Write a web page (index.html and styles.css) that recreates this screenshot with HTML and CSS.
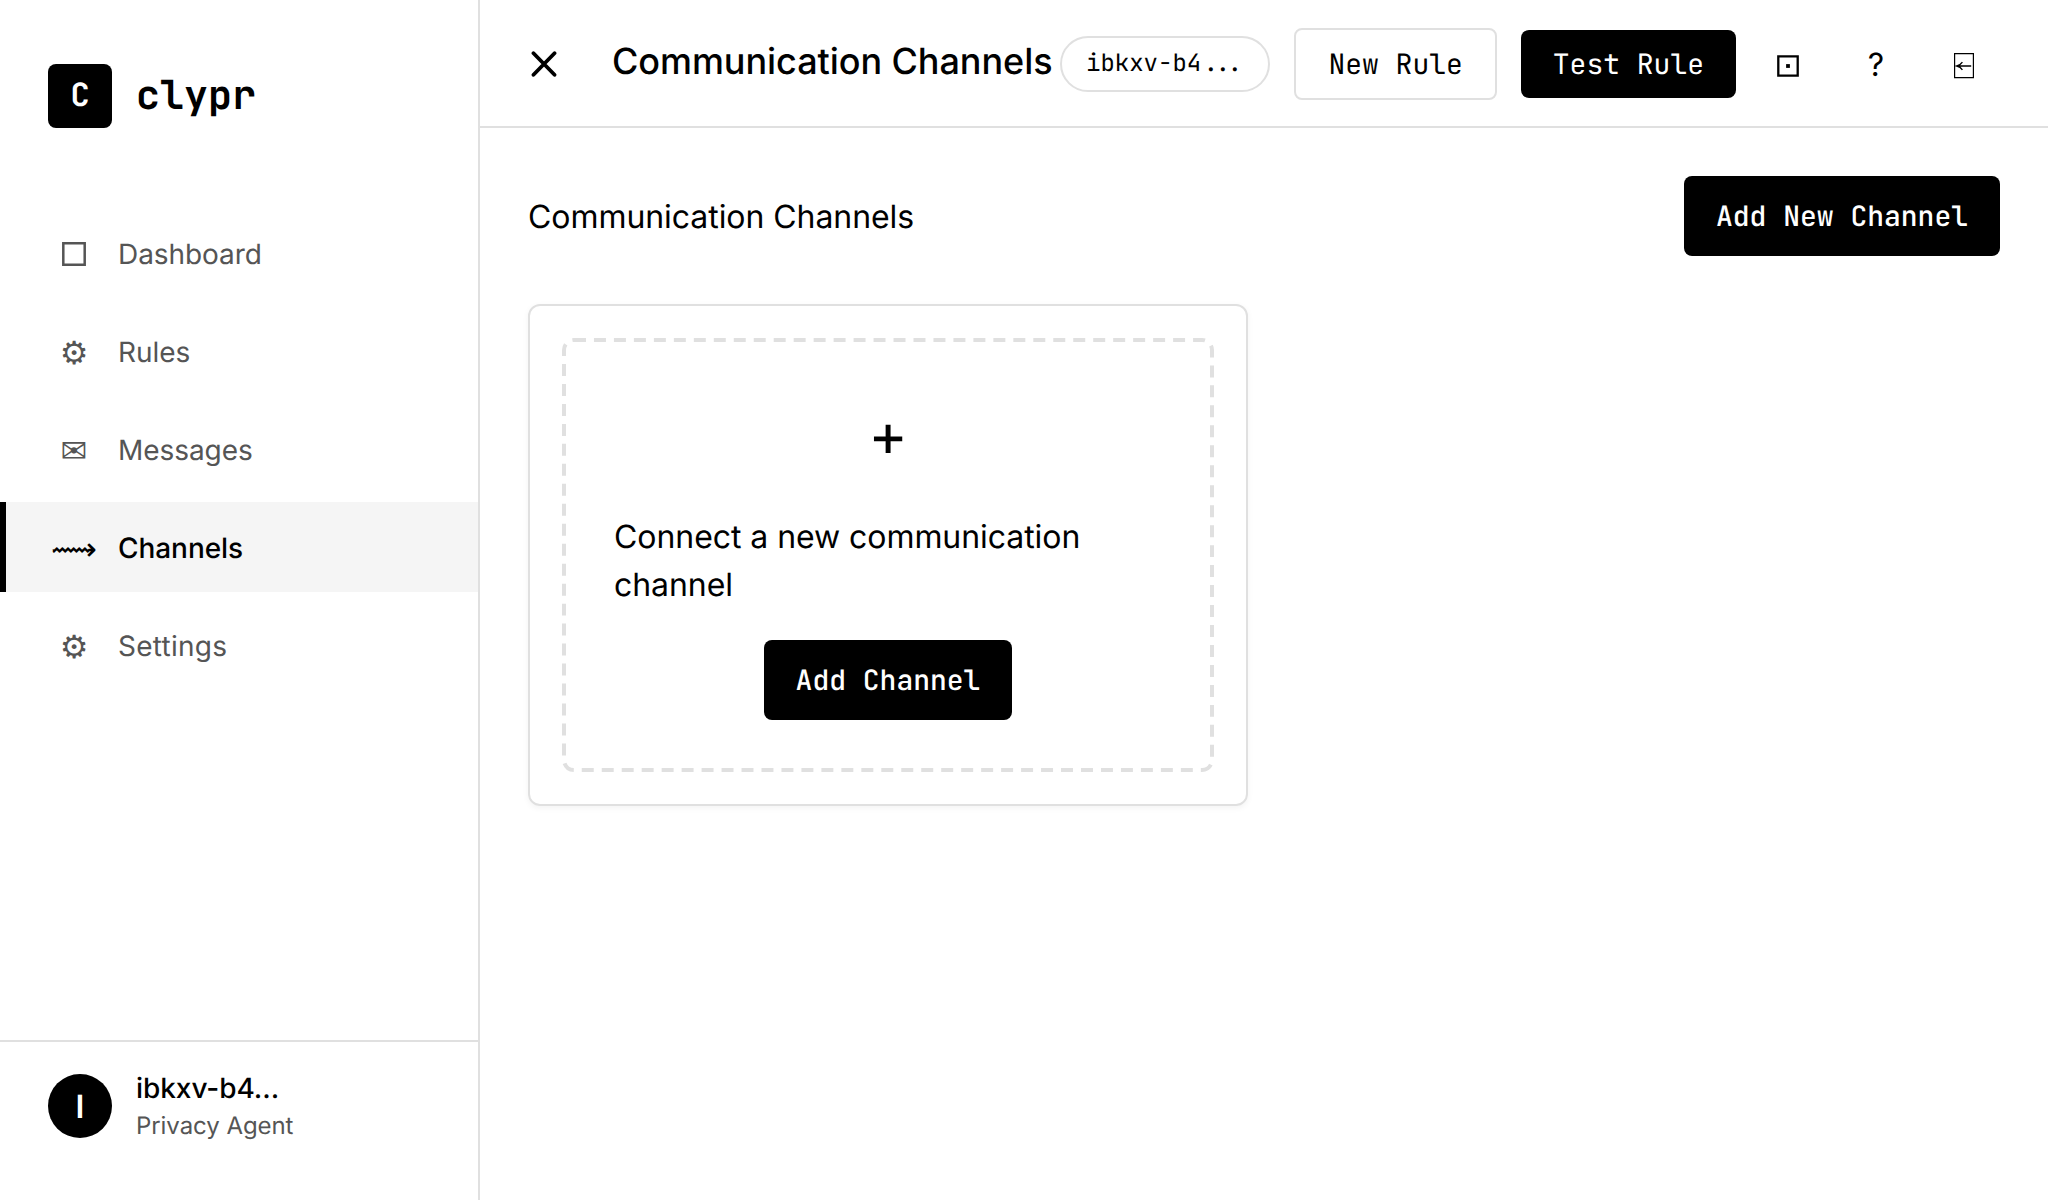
FILE: index.html
```html
<!DOCTYPE html>
<html lang="en">
<head>
<meta charset="utf-8">
<title>clypr</title>
<link rel="stylesheet" href="styles.css">
</head>
<body>
<div class="app">
  <aside class="sidebar">
    <div class="brand"><div class="logo">C</div><span class="wordmark">clypr</span></div>
    <nav class="nav">
      <a class="nav-item"><span class="nav-icon shape"><svg width="24" height="24" viewBox="0 0 24 24"><path d="M1.3 1.3h21.4v21.4H1.3z" fill="none" stroke="currentColor" stroke-width="2.5"/></svg></span>Dashboard</a>
      <a class="nav-item"><span class="nav-icon">⚙</span>Rules</a>
      <a class="nav-item"><span class="nav-icon">✉</span>Messages</a>
      <a class="nav-item active"><span class="nav-icon">⟿</span>Channels</a>
      <a class="nav-item wide"><span class="nav-icon">⚙</span>Settings</a>
    </nav>
    <div class="user">
      <div class="avatar">I</div>
      <div class="user-text"><div class="user-name">ibkxv-b4...</div><div class="user-role">Privacy Agent</div></div>
    </div>
  </aside>
  <main class="main">
    <header class="topbar">
      <button class="close"><svg width="26" height="26" viewBox="0 0 26 26"><path d="M2.5 2.2L23.5 23.8M23.5 2.2L2.5 23.8" stroke="currentColor" stroke-width="3.8" stroke-linecap="round"/></svg></button>
      <h1 class="title">Communication Channels</h1>
      <div class="actions">
        <span class="pill">ibkxv-b4...</span>
        <button class="btn outline">New Rule</button>
        <button class="btn small">Test Rule</button>
        <div class="icons">
          <button class="icon-btn"><svg width="22" height="22" viewBox="0 0 22 22"><path d="M1.3 1.3h19.4v19.4H1.3z" fill="none" stroke="currentColor" stroke-width="2.3"/><path d="M9.1 9.1h3.8v3.8H9.1z" fill="currentColor"/></svg></button>
          <button class="icon-btn help">?</button>
          <button class="icon-btn"><svg class="exit" width="20" height="26" viewBox="0 0 20 26"><path d="M.6 .6h18.8v24H.6z" fill="none" stroke="currentColor" stroke-width="1.2"/><path d="M17.2 13H3M8.4 9.2Q6.5 12 2.8 13Q6.5 14 8.4 16.8" fill="none" stroke="currentColor" stroke-width="1.3"/></svg></button>
        </div>
      </div>
    </header>
    <section class="content">
      <div class="content-head"><h2 class="heading">Communication Channels</h2><button class="btn">Add New Channel</button></div>
      <div class="card"><div class="dropzone">
        <svg class="dashes" width="652" height="434" viewBox="0 0 652 434"><rect x="2" y="2" width="648" height="430" rx="10" fill="none" stroke="#e0e0e0" stroke-width="4" stroke-dasharray="11.98 7.99"/></svg>
        <div class="plus">+</div>
        <p class="message">Connect a new communication channel</p>
        <button class="btn">Add Channel</button>
      </div></div>
    </section>
  </main>
</div>
</body>
</html>
```
FILE: styles.css
```css
* { box-sizing: border-box; margin: 0; padding: 0; }
body { font-family: Inter, "DejaVu Sans", sans-serif; color: #000; background: #fff; text-rendering: geometricPrecision; }
button { border: 0; background: none; color: inherit; font: inherit; text-rendering: inherit; }
svg { display: block; }
.app { display: flex; height: 1200px; overflow: hidden; }
.sidebar { width: 480px; flex: none; border-right: 2px solid #e0e0e0; display: flex; flex-direction: column; }
.brand { display: flex; align-items: center; gap: 24px; padding: 64px 48px 0; }
.logo { width: 64px; height: 64px; border-radius: 8px; background: #000; color: #fff; display: flex; align-items: center; justify-content: center; font: 700 32px/60px "JetBrains Mono", "DejaVu Sans Mono", monospace; padding-bottom: 2px; }
.wordmark { font: 700 40px/62px "JetBrains Mono", "DejaVu Sans Mono", monospace; padding-bottom: 2px; }
.nav { display: flex; flex-direction: column; gap: 8px; margin-top: 80px; }
.nav-item { height: 90px; display: flex; align-items: center; gap: 24px; padding: 1px 0 0 48px; border-left: 6px solid transparent; font-size: 28px; letter-spacing: -0.06px; color: #555; }
.nav-item.active { background: #f5f5f5; border-left-color: #000; color: #000; font-weight: 500; }
.nav-item.wide { letter-spacing: 0.25px; }
.nav-icon { width: 40px; display: flex; justify-content: center; flex: none; font: 400 32px/45px "DejaVu Sans", sans-serif; letter-spacing: 0; padding-top: 3px; }
.nav-icon.shape { padding-top: 0; }
.user { margin-top: auto; height: 160px; border-top: 2px solid #e0e0e0; padding: 32px 48px; display: flex; gap: 24px; }
.avatar { width: 64px; height: 64px; border-radius: 50%; background: #000; color: #fff; display: flex; align-items: center; justify-content: center; font-weight: 600; font-size: 32px; }
.user-name { font-size: 28px; line-height: 34px; font-weight: 500; margin-top: -3px; letter-spacing: -0.06px; }
.user-role { font-size: 24px; line-height: 36px; color: #555; margin-top: 3px; letter-spacing: -0.06px; }
.main { flex: 1; display: flex; flex-direction: column; min-width: 0; }
.topbar { height: 128px; border-bottom: 2px solid #e0e0e0; display: flex; align-items: center; padding: 2px 48px 0 51px; }
.close { width: 26px; margin-right: 55px; }
.title { font-size: 36px; font-weight: 500; line-height: 54px; white-space: nowrap; margin-top: -6px; letter-spacing: -0.06px; }
.actions { margin-left: auto; display: flex; align-items: center; gap: 24px; }
.pill { height: 56px; padding: 0 24px; border: 2px solid #e0e0e0; border-radius: 28px; font: 400 24px/52px "JetBrains Mono", "DejaVu Sans Mono", monospace; text-align: center; }
.btn { height: 80px; padding: 2px 32px 0; border-radius: 8px; background: #000; color: #fff; font: 500 28px/36px "JetBrains Mono", "DejaVu Sans Mono", monospace; white-space: nowrap; }
.btn.outline { height: 72px; border: 2px solid #e0e0e0; background: #fff; color: #000; font-weight: 400; }
.btn.small { height: 68px; font-weight: 400; }
.icons { display: flex; gap: 16px; margin-left: -8px; }
.icon-btn { width: 72px; height: 72px; display: flex; align-items: center; justify-content: center; padding-top: 4px; }
.help { font-size: 32px; padding-top: 0; }
.content { padding: 48px; }
.content-head { display: flex; justify-content: space-between; align-items: center; margin-bottom: 48px; }
.heading { font-size: 32px; line-height: 48px; font-weight: 400; padding-top: 1px; letter-spacing: -0.06px; }
.card { width: 720px; height: 502px; border: 2px solid #e0e0e0; border-radius: 12px; padding: 32px; box-shadow: 0 2px 6px rgba(0,0,0,.05); }
.dropzone { position: relative; height: 434px; padding: 52px; display: flex; flex-direction: column; align-items: center; }
.dashes { position: absolute; inset: 0; }
.plus { font-size: 60px; line-height: 90px; }
.message { font-size: 32px; line-height: 48px; margin: 33px 0 31px; align-self: stretch; letter-spacing: -0.06px; }
```
